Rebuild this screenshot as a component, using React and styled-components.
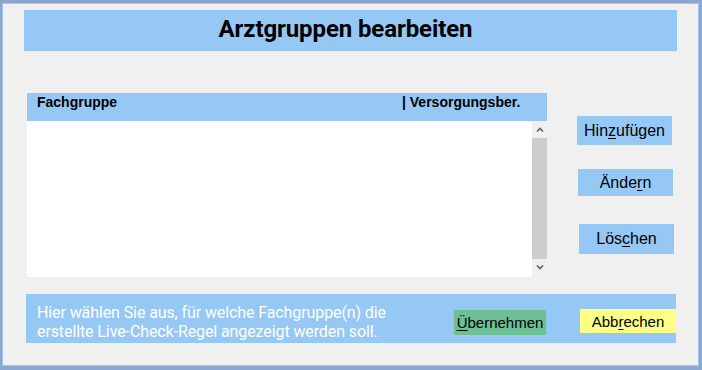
import React from "react";
import styled, { createGlobalStyle } from "styled-components";

const GlobalStyle = createGlobalStyle`
  html, body {
    margin: 0;
    padding: 0;
    background: #f0f0f0;
  }
  * {
    box-sizing: border-box;
  }
`;

const App = () => {
  return (
    <>
      <GlobalStyle />
      <Window>
        <TitleBar>Arztgruppen bearbeiten</TitleBar>
        <Middle>
          <List>
            <ListHeader>
              <HeaderCell $width="365px">Fachgruppe</HeaderCell>
              <HeaderCell>| Versorgungsber.</HeaderCell>
            </ListHeader>
            <ListBody>
              <Rows />
              <Scrollbar>
                <Arrow viewBox="0 0 8 5">
                  <polyline points="1,4.5 4,1.5 7,4.5" />
                </Arrow>
                <Thumb />
                <Arrow viewBox="0 0 8 5">
                  <polyline points="1,0.5 4,3.5 7,0.5" />
                </Arrow>
              </Scrollbar>
            </ListBody>
          </List>
          <SideButtons>
            <SideButton $x="0px" $h="29px">
              Hin<u>z</u>ufügen
            </SideButton>
            <SideButton $x="1px" $h="27px" $top="24px">
              Ände<u>r</u>n
            </SideButton>
            <SideButton $x="2px" $h="30px" $top="28px">
              Lös<u>c</u>hen
            </SideButton>
          </SideButtons>
        </Middle>
        <FooterBar>
          <Hint>
            Hier wählen Sie aus, für welche Fachgruppe(n) die
            <br />
            erstellte Live-Check-Regel angezeigt werden soll.
          </Hint>
          <ActionButton $bg="#6dbf94" $w="92px" $h="25px" $top="16px">
            <u>Ü</u>bernehmen
          </ActionButton>
          <ActionButton $bg="#ffff88" $w="96px" $h="24px" $top="15px" $gap="34px">
            Abb<u>r</u>echen
          </ActionButton>
        </FooterBar>
      </Window>
    </>
  );
};

export default App;

// Styled Components
const Window = styled.div`
  width: 702px;
  height: 370px;
  background: #f0f0f0;
  border-style: solid;
  border-color: #8ca6d1;
  border-width: 3px 3px 4px 2px;
  box-shadow: inset 0 0 0 1px #9fc8f2;
  padding: 7px 0 0 22px;
  display: flex;
  flex-direction: column;
`;

const TitleBar = styled.div`
  width: 653px;
  height: 41px;
  background: #96c8f6;
  display: flex;
  align-items: center;
  justify-content: center;
  font-family: Roboto, "Liberation Sans", sans-serif;
  font-weight: 700;
  font-size: 24px;
  letter-spacing: -0.1px;
  color: #000;
  padding: 0 10px 3px 0;
`;

const Middle = styled.div`
  display: flex;
  margin-top: 42px;
  margin-left: 3px;
`;

const List = styled.div`
  width: 520px;
  height: 184px;
  display: flex;
  flex-direction: column;
`;

const ListHeader = styled.div`
  height: 28px;
  background: #96c8f6;
  display: flex;
  padding: 1px 0 0 10px;
  font-family: "Liberation Sans", Arial, sans-serif;
  font-weight: 700;
  font-size: 14px;
  line-height: 16px;
  color: #000;
`;

const HeaderCell = styled.div`
  width: ${(p) => p.$width || "auto"};
  white-space: nowrap;
`;

const ListBody = styled.div`
  flex: 1;
  display: flex;
`;

const Rows = styled.div`
  flex: 1;
  background: #fff;
`;

const Scrollbar = styled.div`
  width: 15px;
  background: #f0f0f0;
  display: flex;
  flex-direction: column;
  align-items: center;
  padding-top: 6px;
`;

const Arrow = styled.svg`
  width: 8px;
  height: 5px;
  fill: none;
  stroke: #606060;
  stroke-width: 1.6;
  margin: 0 0 6px;
  &:last-child {
    margin: 6px 0 0;
  }
`;

const Thumb = styled.div`
  width: 15px;
  height: 121px;
  background: #cdcdcd;
`;

const SideButtons = styled.div`
  display: flex;
  flex-direction: column;
  align-items: flex-start;
  margin-left: 30px;
  padding-top: 23px;
`;

const SideButton = styled.div`
  width: 95px;
  height: ${(p) => p.$h};
  margin-left: ${(p) => p.$x};
  margin-top: ${(p) => p.$top || "0px"};
  background: #96c8f6;
  display: flex;
  align-items: center;
  justify-content: center;
  font-family: "Liberation Sans", Arial, sans-serif;
  font-size: 16px;
  color: #000;
  u {
    text-decoration-thickness: 1px;
    text-underline-offset: 2px;
  }
`;

const FooterBar = styled.div`
  width: 650px;
  height: 49px;
  margin-top: 17px;
  margin-left: 2px;
  background: #96c8f6;
  display: flex;
  align-items: flex-start;
  padding-left: 11px;
`;

const Hint = styled.div`
  flex: 1;
  padding-top: 9px;
  font-family: Roboto, "Liberation Sans", sans-serif;
  font-size: 16px;
  line-height: 19px;
  letter-spacing: -0.1px;
  color: #fff;
  white-space: nowrap;
`;

const ActionButton = styled.div`
  width: ${(p) => p.$w};
  height: ${(p) => p.$h};
  margin-top: ${(p) => p.$top};
  margin-left: ${(p) => p.$gap || "0px"};
  background: ${(p) => p.$bg};
  display: flex;
  align-items: center;
  justify-content: center;
  font-family: "Liberation Sans", Arial, sans-serif;
  font-size: 15px;
  color: #000;
  u {
    text-decoration-thickness: 1px;
    text-underline-offset: 2px;
  }
`;
